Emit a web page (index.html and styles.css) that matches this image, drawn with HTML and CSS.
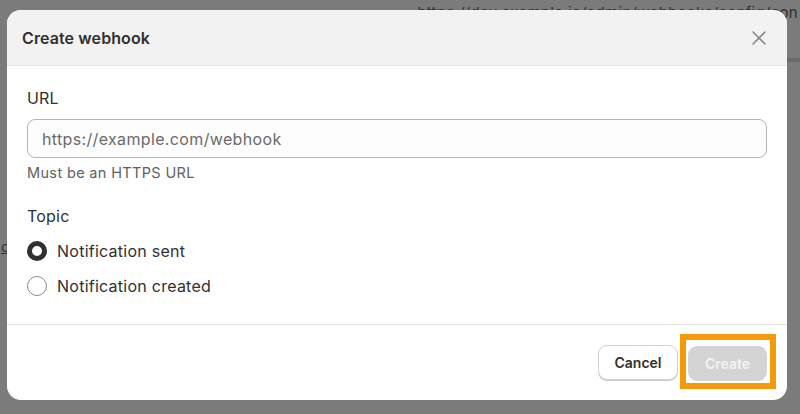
FILE: index.html
```html
<!DOCTYPE html>
<html>
<head>
<meta charset="utf-8">
<link rel="stylesheet" href="styles.css">
</head>
<body>
<div class="page">
  <div class="bg-top">https://dev.example.io/admin/webhooks/config/con</div>
  <div class="bg-line"></div>
  <div class="bg-left">ol</div>
</div>
<div class="overlay">
  <div class="modal">
    <div class="header">
      <h1 class="title">Create webhook</h1>
      <button class="close" aria-label="Close">
        <svg width="16" height="16" viewBox="0 0 16 16"><path d="M2 2 L14 14 M14 2 L2 14" stroke="#8a8a8a" stroke-width="1.6" stroke-linecap="round" fill="none"/></svg>
      </button>
    </div>
    <div class="body">
      <label class="label">URL</label>
      <div class="input">https://example.com/webhook</div>
      <div class="help">Must be an HTTPS URL</div>
      <div class="label topic">Topic</div>
      <div class="radios">
        <div class="radio-row"><span class="radio on"></span><span>Notification sent</span></div>
        <div class="radio-row"><span class="radio"></span><span>Notification created</span></div>
      </div>
    </div>
    <div class="footer">
      <button class="btn cancel">Cancel</button>
      <div class="highlight"><button class="btn create">Create</button></div>
    </div>
  </div>
</div>
</body>
</html>
```
FILE: styles.css
```css
* { box-sizing: border-box; }
html, body { margin: 0; padding: 0; }
body {
  width: 800px;
  height: 414px;
  overflow: hidden;
  background: #7b7b7b;
  font-family: Inter, "Noto Sans", "Liberation Sans", sans-serif;
  position: relative;
}
.page { position: absolute; inset: 0; }
.bg-top {
  position: absolute;
  right: 2px;
  top: 3px;
  font-size: 15px;
  color: #2f2f2f;
  white-space: nowrap;
  letter-spacing: 0.3px;
}
.bg-line {
  position: absolute;
  left: 760px;
  right: 0;
  top: 58px;
  height: 4px;
  background: #6a6a6a;
}
.bg-left {
  position: absolute;
  left: 1px;
  top: 238px;
  font-size: 14px;
  color: #333;
  text-decoration: underline;
}
.overlay {
  position: absolute;
  inset: 0;
  padding: 10px 13px 14px 7px;
}
.modal {
  background: #fff;
  border-radius: 14px;
  height: 390px;
  width: 780px;
  overflow: hidden;
  display: flex;
  flex-direction: column;
}
.header {
  height: 56px;
  background: #f2f2f2;
  border-bottom: 1px solid #e3e3e3;
  display: flex;
  align-items: center;
  justify-content: space-between;
  padding: 0 18px 0 15px;
}
.title {
  margin: 0;
  font-size: 16px;
  font-weight: 600;
  color: #303030;
  letter-spacing: 0.1px;
}
.close {
  background: none;
  border: 0;
  padding: 0;
  width: 20px;
  height: 20px;
  display: flex;
  align-items: center;
  justify-content: center;
}
.body {
  flex: 1;
  padding: 22px 20px 0 20px;
}
.label {
  display: block;
  font-size: 16px;
  color: #303030;
  line-height: 20px;
  letter-spacing: 0.2px;
}
.input {
  margin-top: 11px;
  height: 39px;
  border: 1px solid #b5b5b5;
  border-radius: 8px;
  padding: 0 14px;
  display: flex;
  align-items: center;
  font-size: 16px;
  letter-spacing: 0.35px;
  color: #6a6a6a;
  background: #fdfdfd;
}
.help {
  margin-top: 6px;
  font-size: 14.5px;
  letter-spacing: 0.35px;
  color: #616161;
  line-height: 18px;
}
.topic { margin-top: 24px; }
.radios {
  margin-top: 15px;
  display: flex;
  flex-direction: column;
  gap: 15px;
}
.radio-row {
  display: flex;
  align-items: center;
  gap: 10px;
  font-size: 16px;
  letter-spacing: 0.25px;
  color: #303030;
  line-height: 20px;
}
.radio {
  width: 20px;
  height: 20px;
  border-radius: 50%;
  border: 1px solid #8a8a8a;
  background: #fff;
}
.radio.on {
  border: 5px solid #303030;
}
.footer {
  height: 76px;
  border-top: 1px solid #e3e3e3;
  display: flex;
  align-items: center;
  justify-content: flex-end;
  padding: 0 11px 0 0;
  gap: 2px;
}
.btn {
  height: 35px;
  width: 80px;
  border-radius: 9px;
  font-family: inherit;
  font-size: 14px;
  font-weight: 600;
}
.cancel {
  background: #fff;
  color: #303030;
  border: 1px solid #d4d4d4;
  box-shadow: 0 1px 0 #c8c8c8;
}
.highlight {
  border: 6px solid #f59a0a;
  padding: 6px 3px 2px 2px;
  margin-top: -2px;
}
.create {
  display: block;
  width: 79px;
  background: #d4d4d4;
  color: #f3f3f3;
  border: 0;
}
```
